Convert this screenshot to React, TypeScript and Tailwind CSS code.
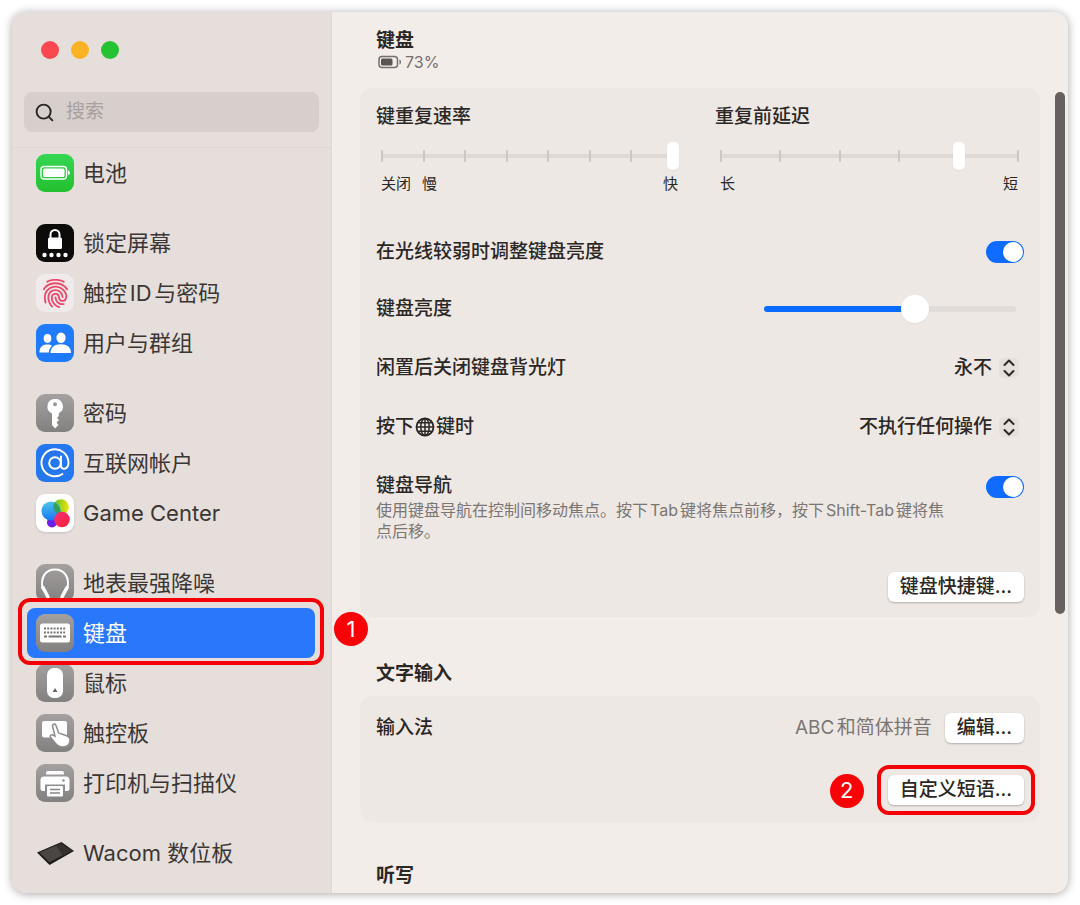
import { useState } from "react";
import type { ReactNode } from "react";
import { Search } from "lucide-react";
import { IoFingerPrint } from "react-icons/io5";

const grayTile = "bg-gradient-to-b from-[#a3a09f] to-[#838080]";

function Tile({ className, children }: { className: string; children: ReactNode }) {
    return (
        <span className={`flex size-[38px] shrink-0 items-center justify-center overflow-hidden rounded-[9px] ${className}`}>
            <svg viewBox="0 0 38 38" className="size-full" fill="none" aria-hidden="true">
                {children}
            </svg>
        </span>
    );
}

const icons: Record<string, ReactNode> = {
    battery: (
        <Tile className="bg-gradient-to-b from-[#35d653] to-[#22c02e]">
            <rect x="5" y="12.5" width="25.5" height="12.5" rx="3" stroke="#fff" strokeWidth="1.4" />
            <rect x="7" y="14.5" width="21.5" height="8.5" rx="1.5" fill="#fff" />
            <path d="M32 16.5c2.500.6 2.500 4 0 4.600z" fill="#fff" />
        </Tile>
    ),
    lock: (
        <Tile className="bg-[#0d0b0a]">
            <path d="M14.500 14v-3.500a4.500 4.500 0 0 1 9 0V14" stroke="#fff" strokeWidth="2" />
            <rect x="12" y="13.500" width="14" height="11.500" rx="1.500" fill="#fff" />
            <circle cx="8.500" cy="31" r="2.200" fill="#fff" />
            <circle cx="15.500" cy="31" r="2.200" fill="#fff" />
            <circle cx="22.500" cy="31" r="2.200" fill="#fff" />
            <circle cx="29.500" cy="31" r="2.200" fill="#fff" />
        </Tile>
    ),
    touch: (
        <span className="flex size-[38px] shrink-0 items-center justify-center rounded-[9px] bg-[#f0ebea]">
            <IoFingerPrint className="size-[31px] text-[#ea4a6c]" />
        </span>
    ),
    users: (
        <Tile className="bg-[#1f7bfb]">
            <ellipse cx="11.500" cy="14.500" rx="3.800" ry="4.400" fill="#fff" />
            <path d="M3.500 28.500c0-5.500 3-8 8-8 2 0 3.500.5 4.500 1.300-2 1.700-3 4-3.200 6.700z" fill="#fff" />
            <ellipse cx="25" cy="13.800" rx="4.600" ry="5.200" fill="#fff" />
            <path d="M14.500 29c0-5.500 4-8.800 10.300-8.800S35 23.500 35 29z" fill="#fff" />
        </Tile>
    ),
    key: (
        <Tile className={grayTile}>
            <path
                fillRule="evenodd"
                d="M19 5a7.500 7.500 0 0 0-3 14.400V31l3 3.500 3.500-3.500-2-2.500 2.500-2.500-2-2 1.800-2v-2.800A7.500 7.500 0 0 0 19 5zm0 3.200a2 2 0 1 1 0 4 2 2 0 0 1 0-4z"
                fill="#fff"
            />
        </Tile>
    ),
    at: (
        <Tile className="bg-[#2477ee]">
            <circle cx="19" cy="19" r="5.800" stroke="#fff" strokeWidth="2" />
            <path d="M25 12.500v9c0 5 7.500 4.500 7.500-3A13.500 13.500 0 1 0 26.500 30" stroke="#fff" strokeWidth="2" strokeLinecap="round" />
        </Tile>
    ),
    game: (
        <Tile className="bg-white shadow-sm">
            <defs>
                <linearGradient id="gcBlue" x1="0" y1="0" x2="0" y2="1">
                    <stop offset="0" stopColor="#4cc5e8" />
                    <stop offset="1" stopColor="#1976f5" />
                </linearGradient>
                <linearGradient id="gcYellow" x1="0" y1="0" x2="1" y2="0">
                    <stop offset="0" stopColor="#4fc32b" />
                    <stop offset="1" stopColor="#f4e409" />
                </linearGradient>
                <linearGradient id="gcRed" x1="0" y1="0" x2="1" y2="1">
                    <stop offset="0" stopColor="#f0327d" />
                    <stop offset="1" stopColor="#ff1f33" />
                </linearGradient>
            </defs>
            <circle cx="16" cy="28.500" r="5" fill="#6a1fe8" />
            <circle cx="25" cy="13" r="7.800" fill="url(#gcYellow)" />
            <circle cx="15" cy="17" r="9.500" fill="url(#gcBlue)" />
            <path d="M18.500 8.600a8 8 0 0 0 5.200 12A9.500 9.500 0 0 0 18.500 8.600z" fill="#2f9e63" />
            <circle cx="26" cy="25.500" r="7.800" fill="url(#gcRed)" />
        </Tile>
    ),
    headphones: (
        <Tile className={grayTile}>
            <path d="M7 26C3.500 13 10 5.500 19 5.500S34.500 13 31 26" stroke="#fff" strokeWidth="2" />
            <path d="M7 23.500l5 9.500M31 23.500L26 33" stroke="#fff" strokeWidth="3.500" strokeLinecap="round" />
        </Tile>
    ),
    keyboard: (
        <Tile className={grayTile}>
            <rect x="4" y="9.500" width="30" height="19" rx="2.500" fill="#fff" />
            <path d="M8 14.500h22M8 18.500h22" stroke="#777" strokeWidth="2" strokeDasharray="2 1.200" />
            <path d="M8 22.500h3M12.500 22.500h13M27 22.500h3" stroke="#777" strokeWidth="2" />
        </Tile>
    ),
    mouse: (
        <Tile className={grayTile}>
            <rect x="11" y="4" width="16" height="30" rx="7" fill="#fff" />
            <path d="M19 24l2.500 4h-5z" fill="#666" />
        </Tile>
    ),
    trackpad: (
        <Tile className={grayTile}>
            <rect x="6" y="7" width="25" height="16.500" rx="2" fill="#fff" />
            <path
                d="M16.600 12.500c-.6-2.400 2.600-3.300 3.400-1l2.700 7.500 7.300 2.500c3.500 1.200 4.500 3 4 6-.7 3.500-3.500 5.500-7 5.500-3.500 0-6-1.500-8-4.200l-4.500-5.600c-1-2 1-3 2.500-2.200l2 1z"
                fill="#fff"
                stroke="#8f8c8b"
                strokeWidth="1.500"
            />
        </Tile>
    ),
    printer: (
        <Tile className={grayTile}>
            <path d="M10 10.500V9a2 2 0 0 1 2-2h14a2 2 0 0 1 2 2v1.500z" fill="#fff" />
            <path d="M8 12.500h22a3.500 3.500 0 0 1 3.500 3.500v8.500a2.500 2.500 0 0 1-2.500 2.500h-2v-6.500H9V27H7a2.500 2.500 0 0 1-2.500-2.500V16A3.500 3.500 0 0 1 8 12.500z" fill="#fff" />
            <rect x="11" y="22" width="16" height="10.500" rx="1" fill="#fff" />
            <path d="M14 25.500h10M14 29h10" stroke="#888" strokeWidth="1.500" />
            <circle cx="27.500" cy="16.500" r="1.200" fill="#888" />
        </Tile>
    ),
    tablet: (
        <Tile className="">
            <path d="M1 18.500L25.500 8 38 17 13.500 31z" fill="#1d1a19" />
            <path d="M3.500 18.500L25 9.500l10.500 7.200-22 11.500z" fill="#4a4644" />
            <path d="M20 11.600l5-2.100 10.500 7.200-9 4.700z" fill="#35312f" />
        </Tile>
    ),
};

const groups = [
    [{ icon: "battery", label: "电池" }],
    [
        { icon: "lock", label: "锁定屏幕" },
        { icon: "touch", label: "触控ID与密码" },
        { icon: "users", label: "用户与群组" },
    ],
    [
        { icon: "key", label: "密码" },
        { icon: "at", label: "互联网帐户" },
        { icon: "game", label: "Game Center" },
    ],
    [
        { icon: "headphones", label: "地表最强降噪" },
        { icon: "keyboard", label: "键盘", active: true },
        { icon: "mouse", label: "鼠标" },
        { icon: "trackpad", label: "触控板" },
        { icon: "printer", label: "打印机与扫描仪" },
    ],
    [{ icon: "tablet", label: "Wacom 数位板" }],
];

function Badge({ n, className }: { n: number; className: string }) {
    return (
        <span className={`absolute z-20 flex size-[34px] items-center justify-center rounded-full bg-[#fb0007] text-[22px] text-white ${className}`}>
            {n}
        </span>
    );
}

function Sidebar() {
    return (
        <aside className="w-80 shrink-0 rounded-l-[14px] border-r border-[#dfd8d5] bg-[#e5dedb] pt-[29px] pb-[15px]">
            <div className="flex gap-3 px-[29px]">
                <button type="button" aria-label="关闭窗口" className="size-[18px] rounded-full bg-[#fb4850]" />
                <button type="button" aria-label="最小化" className="size-[18px] rounded-full bg-[#fbb224]" />
                <button type="button" aria-label="缩放" className="size-[18px] rounded-full bg-[#25c232]" />
            </div>
            <div className="mx-3 mt-[33px] flex h-10 items-center gap-[11px] rounded-lg bg-[#d6cfcb] px-[10px]">
                <Search className="size-[21px] text-[#2b2725]" strokeWidth={2.2} />
                <input
                    type="search"
                    aria-label="搜索"
                    placeholder="搜索"
                    className="min-w-0 flex-1 bg-transparent text-[19px] outline-none placeholder:text-[#a8a19d]"
                />
            </div>
            <nav className="mt-[15px] flex flex-col gap-5 border-t border-[#dcd5d2] pr-4 pl-[15px]">
                {groups.map((items, i) => (
                    <ul key={i}>
                        {items.map((item) => (
                            <li key={item.label} className="relative">
                                <a
                                    href="#"
                                    className={`flex h-[50px] items-center gap-[9px] rounded-lg px-[9px] text-[22px] ${item.active ? "bg-[#2977fb] text-white" : "text-[#3b3634]"}`}
                                >
                                    {icons[item.icon]}
                                    {item.label}
                                </a>
                                {item.active && (
                                    <>
                                        <span className="pointer-events-none absolute -inset-x-[9px] -top-[10px] -bottom-[7px] z-10 rounded-xl border-4 border-[#f40006]" />
                                        <Badge n={1} className="top-1 left-full ml-[19px]" />
                                    </>
                                )}
                            </li>
                        ))}
                    </ul>
                ))}
            </nav>
        </aside>
    );
}

function TickSlider({ id, title, ticks, initial, children }: { id: string; title: string; ticks: number; initial: number; children: ReactNode }) {
    const [value, setValue] = useState(initial);
    return (
        <div>
            <label htmlFor={id} className="block text-[19px] leading-7 font-medium">{title}</label>
            <div className="mt-[11px] grid items-center">
                <div className="col-start-1 row-start-1 mx-[6px] h-1 bg-[#dfd9d6]" />
                <div className="col-start-1 row-start-1 mx-[5px] flex justify-between">
                    {Array.from({ length: ticks }, (_, i) => (
                        <span key={i} className="h-3 w-[2px] rounded-full bg-[#cdc7c4]" />
                    ))}
                </div>
                <input
                    id={id}
                    type="range"
                    min={0}
                    max={ticks - 1}
                    value={value}
                    onChange={(e) => setValue(Number(e.target.value))}
                    className="relative col-start-1 row-start-1 h-7 w-full appearance-none bg-transparent [&::-webkit-slider-thumb]:h-7 [&::-webkit-slider-thumb]:w-3 [&::-webkit-slider-thumb]:appearance-none [&::-webkit-slider-thumb]:rounded-[5px] [&::-webkit-slider-thumb]:bg-white [&::-webkit-slider-thumb]:shadow-xs"
                />
            </div>
            <div className="mt-1 flex pr-px pl-[5px] text-[15px] leading-5">{children}</div>
        </div>
    );
}

function Toggle({ id }: { id: string }) {
    return (
        <input
            id={id}
            type="checkbox"
            role="switch"
            defaultChecked
            className="flex h-[22px] w-[38px] shrink-0 cursor-pointer appearance-none items-center rounded-full bg-[#c9c3c0] p-px before:size-5 before:rounded-full before:bg-white checked:justify-end checked:bg-[#0f6bff]"
        />
    );
}

function Popup({ id, options }: { id: string; options: string[] }) {
    return (
        <div className="grid items-center pr-[5px]">
            <span className="col-start-1 row-start-1 flex size-5 items-center justify-center justify-self-end rounded-[5px] bg-[#e6e0dc]">
                <svg viewBox="0 0 20 20" className="size-5" fill="none" stroke="#2b2725" strokeWidth="2" strokeLinecap="round" strokeLinejoin="round" aria-hidden="true">
                    <path d="M5.500 7L10 2.500 14.500 7M5.500 13l4.500 4.500 4.500-4.500" />
                </svg>
            </span>
            <select id={id} className="relative col-start-1 row-start-1 field-sizing-content appearance-none bg-transparent pr-[27px] text-right text-[19px] leading-7 font-medium outline-none">
                {options.map((o) => (
                    <option key={o}>{o}</option>
                ))}
            </select>
        </div>
    );
}

function PushButton({ children }: { children: ReactNode }) {
    return (
        <button type="button" className="h-[30px] rounded-md bg-white px-3 text-[19px] leading-7 font-medium whitespace-nowrap shadow-[0_1px_2px_rgba(0,0,0,0.25)]">
            {children}
        </button>
    );
}

const row = "flex items-center justify-between border-t border-[#ede6e2]";
const rowLabel = "text-[19px] leading-7 font-medium";

function KeyboardPane() {
    const [brightness, setBrightness] = useState(61);

    return (
        <main className="flex min-w-0 flex-1 flex-col text-[#2b2725]">
            <header className="h-[76px] pt-4 pl-11">
                <h1 className="text-[19px] leading-[26px] font-bold">键盘</h1>
                <p className="flex items-center gap-[3px] pl-[2px] text-[16px] leading-4 text-[#75706d]">
                    <svg viewBox="0 0 24 14" className="h-[14px] w-6" fill="none" aria-hidden="true">
                        <rect x="1" y="1.500" width="18.500" height="11" rx="3" stroke="#75706d" strokeWidth="1.500" />
                        <rect x="3" y="3.500" width="11.500" height="7" rx="1.500" fill="#5a5552" />
                        <path d="M21.500 4.500c2 .5 2 4.500 0 5z" fill="#75706d" />
                    </svg>
                    73%
                </p>
            </header>
            <div className="flex flex-1 pl-7">
                <div className="min-w-0 flex-1">
                    <section className="rounded-xl bg-[#eee8e4] px-4">
                        <div className="grid h-[133px] grid-cols-[303fr_309fr] gap-9 pt-[15px]">
                            <TickSlider id="repeat" title="键重复速率" ticks={8} initial={7}>
                                <span>关闭</span>
                                <span className="ml-[11px] flex-1">慢</span>
                                <span>快</span>
                            </TickSlider>
                            <TickSlider id="delay" title="重复前延迟" ticks={6} initial={4}>
                                <span className="flex-1">长</span>
                                <span className="pr-[5px]">短</span>
                            </TickSlider>
                        </div>
                        <div className={`${row} h-[59px] pt-[2px]`}>
                            <label htmlFor="auto" className={rowLabel}>在光线较弱时调整键盘亮度</label>
                            <Toggle id="auto" />
                        </div>
                        <div className={`${row} h-[57px] pr-2`}>
                            <label htmlFor="brightness" className={rowLabel}>键盘亮度</label>
                            <input
                                id="brightness"
                                type="range"
                                value={brightness}
                                onChange={(e) => setBrightness(Number(e.target.value))}
                                style={{ backgroundImage: `linear-gradient(to right, #0a6cff ${brightness}%, #e2dcd9 ${brightness}%)` }}
                                className="h-[6px] w-[252px] appearance-none rounded-full [&::-webkit-slider-thumb]:size-7 [&::-webkit-slider-thumb]:appearance-none [&::-webkit-slider-thumb]:rounded-full [&::-webkit-slider-thumb]:bg-white [&::-webkit-slider-thumb]:shadow-xs"
                            />
                        </div>
                        <div className={`${row} h-[59px] pt-[2px]`}>
                            <label htmlFor="idle" className={rowLabel}>闲置后关闭键盘背光灯</label>
                            <Popup id="idle" options={["永不"]} />
                        </div>
                        <div className={`${row} h-[59px] pt-[2px]`}>
                            <label htmlFor="globe" className={`${rowLabel} flex items-center`}>
                                按下
                                <svg viewBox="0 0 20 20" className="mx-px size-5" fill="none" stroke="#2b2725" strokeWidth="1.500" aria-label="地球仪">
                                    <circle cx="10" cy="10" r="8.500" strokeWidth="1.800" />
                                    <ellipse cx="10" cy="10" rx="4.200" ry="8.500" />
                                    <path d="M10 1.500v17M1.500 10h17M3.500 5.800h13M3.500 14.200h13" />
                                </svg>
                                键时
                            </label>
                            <Popup id="globe" options={["不执行任何操作"]} />
                        </div>
                        <div className="flex h-[101px] items-start justify-between border-t border-[#ede6e2] pt-4">
                            <div>
                                <label htmlFor="nav" className={`${rowLabel} block`}>键盘导航</label>
                                <p className="max-w-[580px] text-[16px] leading-[21px] text-[#7b7673]">
                                    使用键盘导航在控制间移动焦点。按下Tab键将焦点前移，按下Shift-Tab键将焦点后移。
                                </p>
                            </div>
                            <div className="pt-1">
                                <Toggle id="nav" />
                            </div>
                        </div>
                        <div className="flex h-[61px] items-center justify-end border-t border-[#ede6e2]">
                            <PushButton>键盘快捷键...</PushButton>
                        </div>
                    </section>

                    <h2 className="mt-[43px] mb-2 pl-4 text-[19px] leading-7 font-bold">文字输入</h2>
                    <section className="rounded-xl bg-[#eee8e4] px-4 pb-1">
                        <div className="flex h-16 items-center justify-between">
                            <span className={rowLabel}>输入法</span>
                            <div className="flex items-center gap-[13px]">
                                <span className="text-[19px] leading-7 text-[#7b7673]">ABC和简体拼音</span>
                                <PushButton>编辑...</PushButton>
                            </div>
                        </div>
                        <div className="flex h-[58px] items-center justify-end border-t border-[#ede6e2]">
                            <div className="relative">
                                <PushButton>自定义短语...</PushButton>
                                <span className="pointer-events-none absolute -inset-x-[11px] -inset-y-[10px] rounded-xl border-4 border-[#f40006]" />
                                <Badge n={2} className="-top-px right-full mr-6" />
                            </div>
                        </div>
                    </section>
                    <h2 className="mt-10 pl-4 text-[19px] leading-7 font-bold">听写</h2>
                </div>
                <div className="mt-1 mr-[3px] ml-[15px] h-[522px] w-[10px] shrink-0 rounded-full bg-[#66615e]" />
            </div>
        </main>
    );
}

export default function App() {
    return (
        <div className="bg-white p-3 font-['Inter','Noto_Sans_CJK_SC',sans-serif] [text-autospace:normal]">
            <div className="flex rounded-[14px] bg-[#f3edea] shadow-[0_1px_10px_rgba(0,0,0,0.35)]">
                <Sidebar />
                <KeyboardPane />
            </div>
        </div>
    );
}
